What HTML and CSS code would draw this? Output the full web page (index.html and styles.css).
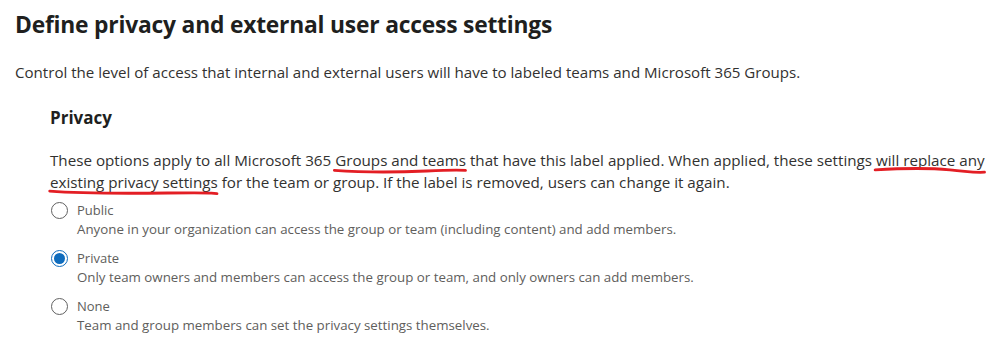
FILE: index.html
```html
<!DOCTYPE html>
<html>
	<head>
		<meta charset="UTF-8">
		<title>Privacy settings</title>
		<link rel="stylesheet" href="styles.css">
	</head>
	<body>
		<div class="page">
			<h1 class="title">Define privacy and external user access settings</h1>
			<p class="intro">Control the level of access that internal and external users will have to labeled teams and Microsoft 365 Groups.</p>

			<div class="section">
				<h2 class="section-title">Privacy</h2>
				<p class="section-text">These options apply to all Microsoft 365 <span class="mark">Groups and teams<svg class="ink ink1" viewBox="0 0 100 10" preserveAspectRatio="none"><path d="M1 4 C 20 7, 50 7, 70 5 S 92 3, 99 4"/></svg></span> that have this label applied. When applied, these settings <span class="mark">will replace any<svg class="ink ink2" viewBox="0 0 100 10" preserveAspectRatio="none"><path d="M1 3 C 20 1, 50 0, 68 3 S 88 8, 99 7"/></svg></span><br><span class="mark">existing privacy settings<svg class="ink ink3" viewBox="0 0 100 10" preserveAspectRatio="none"><path d="M1 2 C 15 5, 40 6, 70 5 S 92 5, 99 6"/></svg></span> for the team or group. If the label is removed, users can change it again.</p>

				<div class="options">
					<label class="option">
						<span class="radio"></span>
						<span class="option-body">
							<span class="option-name">Public</span>
							<span class="option-desc">Anyone in your organization can access the group or team (including content) and add members.</span>
						</span>
					</label>
					<label class="option">
						<span class="radio checked"></span>
						<span class="option-body">
							<span class="option-name">Private</span>
							<span class="option-desc">Only team owners and members can access the group or team, and only owners can add members.</span>
						</span>
					</label>
					<label class="option">
						<span class="radio"></span>
						<span class="option-body">
							<span class="option-name">None</span>
							<span class="option-desc">Team and group members can set the privacy settings themselves.</span>
						</span>
					</label>
				</div>
			</div>
		</div>
	</body>
</html>
```

FILE: styles.css
```css
*{
	margin: 0;
	padding: 0;
	box-sizing: border-box;
}
body{
	background: #fff;
	font-family: "Open Sans", "Noto Sans", sans-serif;
	color: #323130;
}
.page{
	padding: 10px 4px 0 15px;
}
.title{
	font-size: 22.8px;
	font-weight: 700;
	line-height: 30px;
	color: #201f1e;
	letter-spacing: -0.2px;
}
.intro{
	margin-top: 22px;
	font-size: 15.1px;
	line-height: 20px;
}
.section{
	padding-left: 35px;
	margin-top: 24px;
}
.section-title{
	font-size: 17px;
	font-weight: 700;
	line-height: 24px;
	color: #201f1e;
}
.section-text{
	margin-top: 19px;
	font-size: 15.2px;
	line-height: 22px;
}
.mark{
	position: relative;
	white-space: nowrap;
}
.ink{
	position: absolute;
	left: -2px;
	width: calc(100% + 3px);
	height: 6px;
	top: 100%;
	margin-top: -2px;
	overflow: visible;
}
.ink path{
	fill: none;
	stroke: #e31e24;
	stroke-width: 2.8px;
	stroke-linecap: round;
	vector-effect: non-scaling-stroke;
}
.options{
	margin-top: 8px;
	display: flex;
	flex-direction: column;
	gap: 10px;
}
.option{
	display: flex;
	gap: 9px;
	align-items: flex-start;
}
.radio{
	width: 17px;
	height: 17px;
	border: 1px solid #616161;
	border-radius: 50%;
	margin-top: 1px;
	margin-left: 1px;
	display: flex;
	align-items: center;
	justify-content: center;
	flex: none;
}
.radio.checked{
	border-color: #0f6cbd;
}
.radio.checked::after{
	content: "";
	width: 11px;
	height: 11px;
	border-radius: 50%;
	background: #0f6cbd;
}
.option-body{
	display: flex;
	flex-direction: column;
}
.option-name{
	font-size: 13px;
	line-height: 19px;
	color: #605e5c;
}
.option-desc{
	font-size: 13.3px;
	line-height: 19px;
	color: #605e5c;
}
```
